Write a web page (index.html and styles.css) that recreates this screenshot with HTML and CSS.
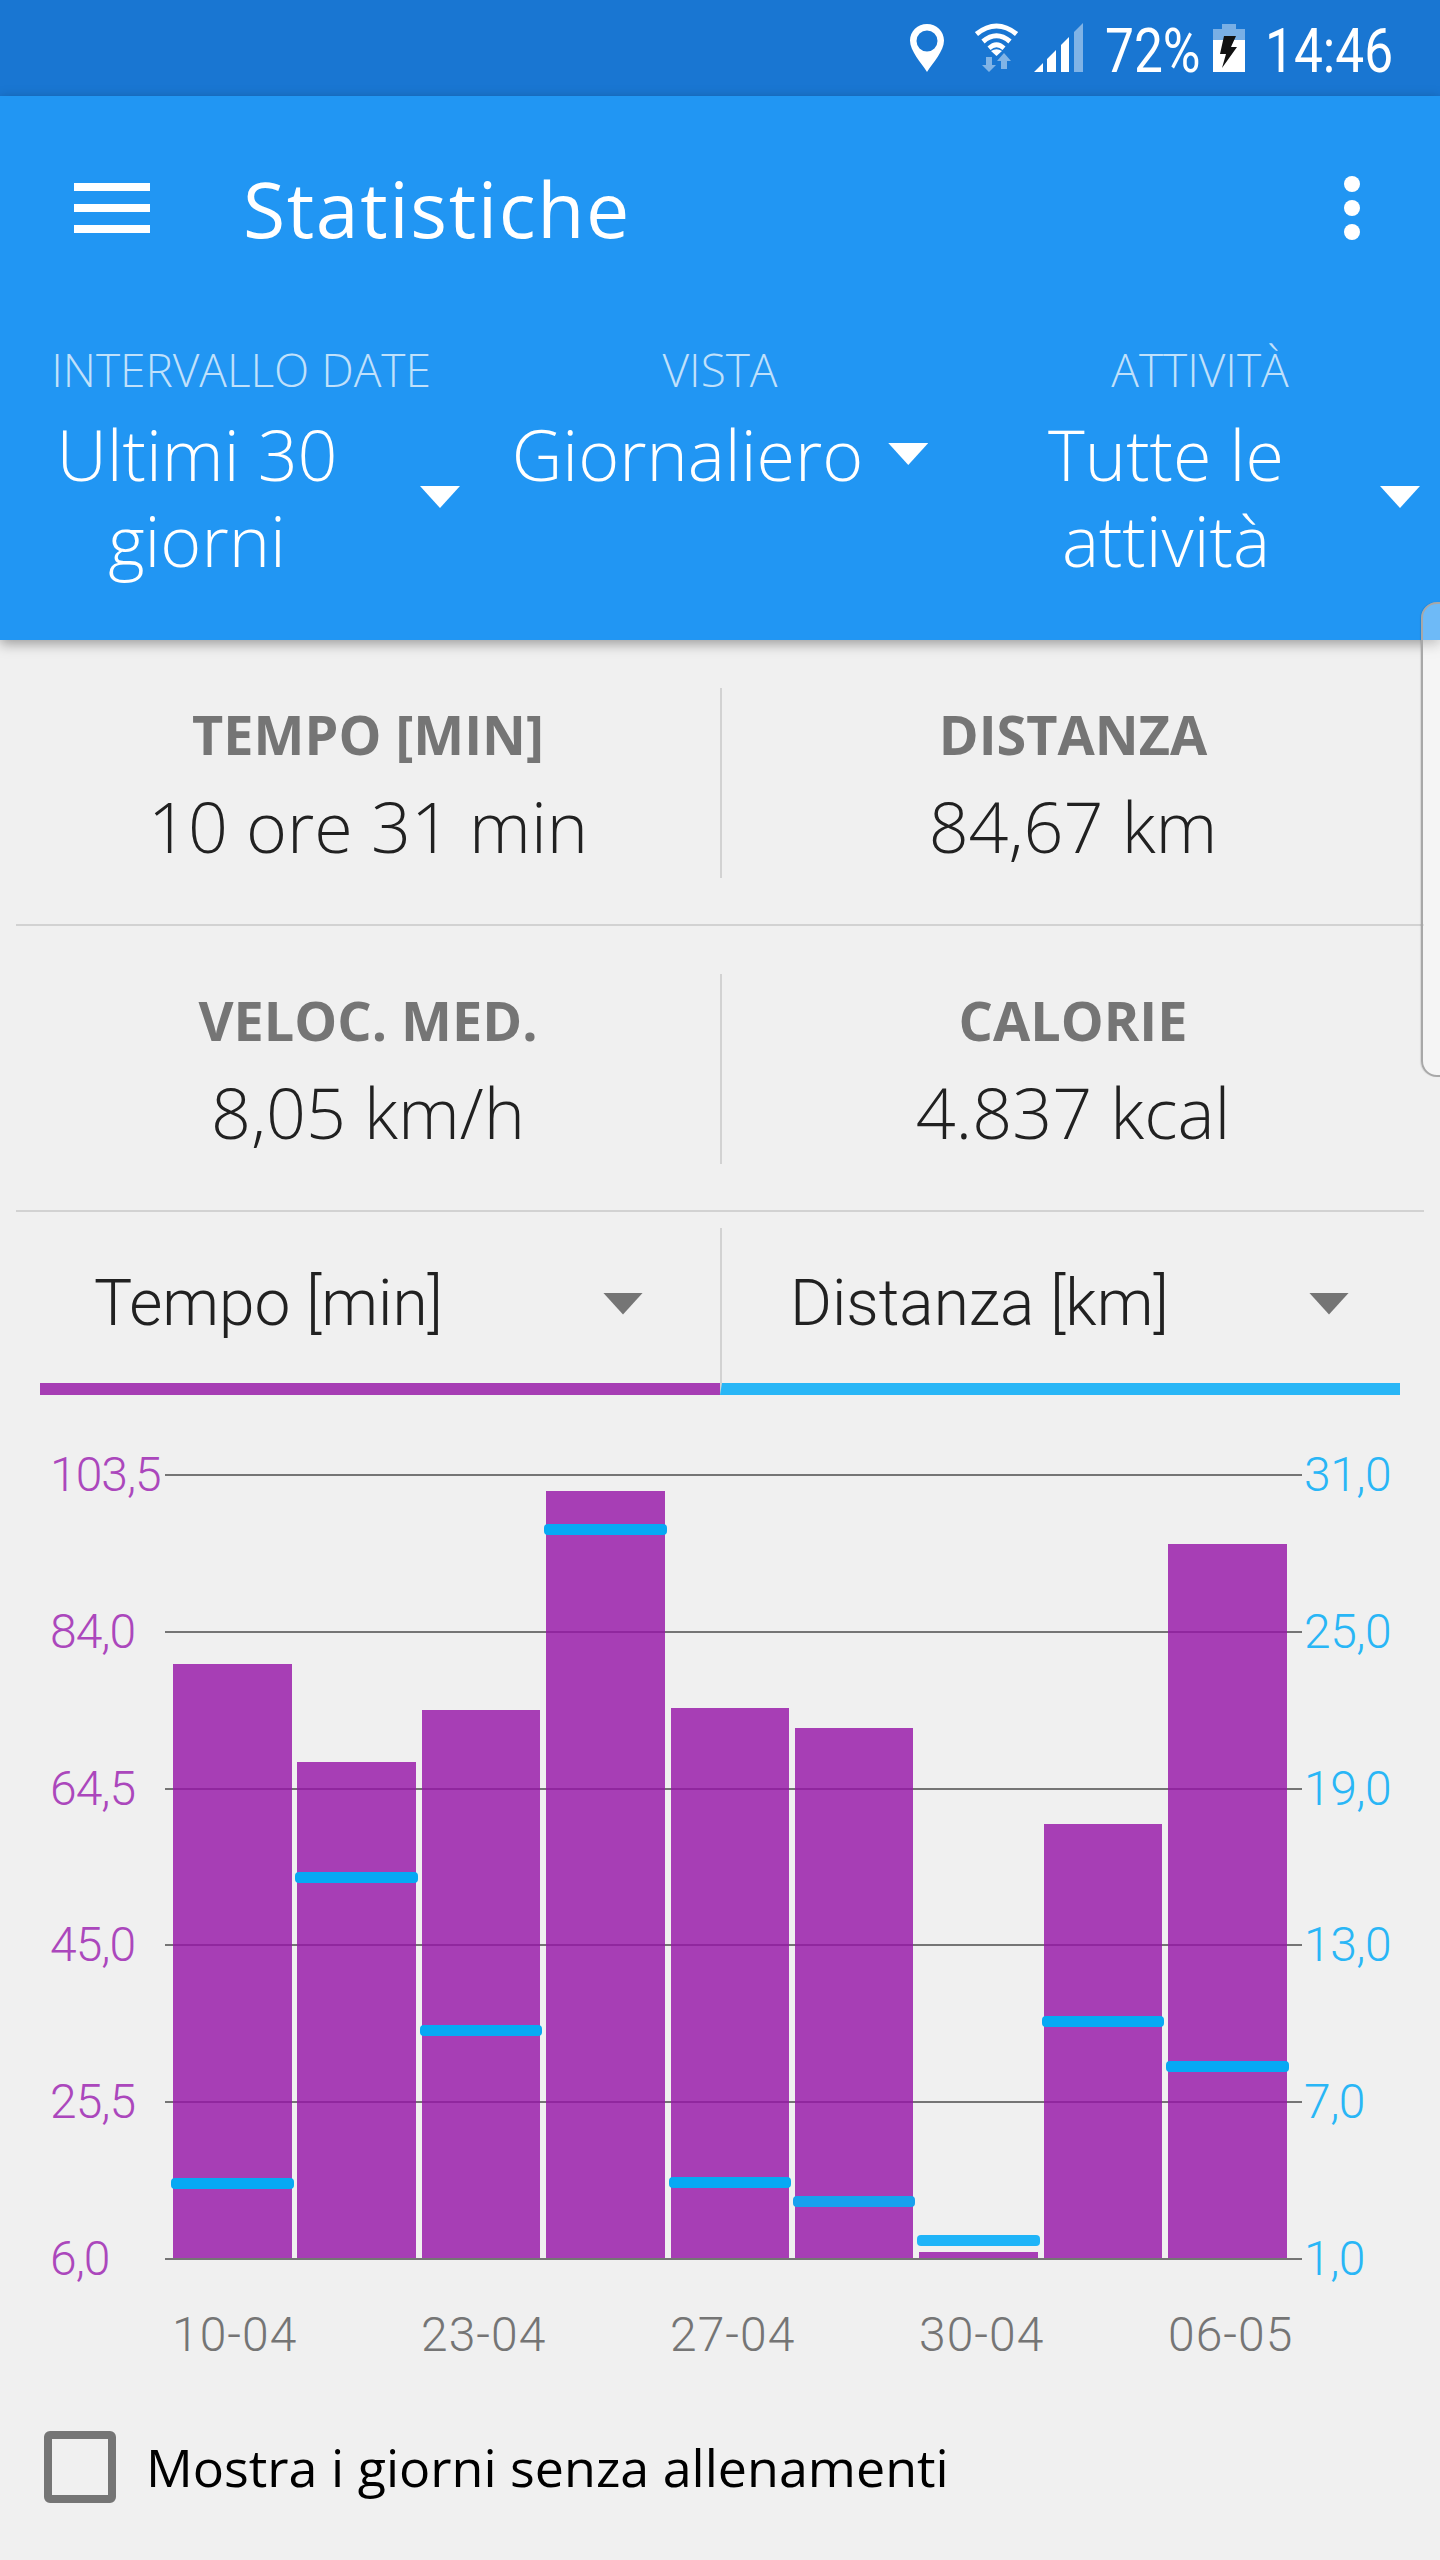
FILE: index.html
```html
<!DOCTYPE html>
<html lang="it">
<head>
<meta charset="utf-8">
<title>Statistiche</title>
<link rel="stylesheet" href="styles.css">
</head>
<body>
<div class="screen">
  <div class="statusbar">
    <svg class="ic-pin" viewBox="0 0 34 48"><path fill="#fff" fill-rule="evenodd" d="M17 0C7.6 0 0 7.4 0 16.5 0 27 11 38.5 17 48c6-9.5 17-21 17-31.5C34 7.4 26.4 0 17 0Zm0 6.5a10.5 10.5 0 1 1 0 21 10.5 10.5 0 0 1 0-21Z"/></svg>
    <svg class="ic-wifi" viewBox="0 0 43 49">
      <g fill="none" stroke="#fff" stroke-width="5"><path d="M1.5 11Q21.500 -5 41.500 11"/><path d="M8 18.500Q21.500 7 35 18.500"/></g>
      <path fill="#fff" d="M12.500 23.500Q21.500 15 30.500 23.500L27.500 27Q21.500 21.500 15.500 27Z"/>
      <path fill="#fff" d="M21.500 33L16 28Q21.500 24.500 27 28Z"/>
      <g fill="#fff" opacity=".45"><path d="M11 34h6v8h4l-7 7-7-7h4z"/><path d="M26 46h6v-8h4l-7-8-7 8h4z"/></g>
    </svg>
    <svg class="ic-signal" viewBox="0 0 49 49">
      <path fill="#fff" d="M0 49 9 40V49ZM13 36 22 27V49H13ZM27 22 35 14V49H27Z"/>
      <path fill="#fff" opacity=".45" d="M40 9 49 0V49H40Z"/>
    </svg>
    <span class="st-text st-pct">72%</span>
    <svg class="ic-batt" viewBox="0 0 32 48">
      <path fill="#fff" opacity=".42" d="M9 0H23V5H32V16H0V5H9Z"/>
      <path fill="#fff" d="M0 16H32V48H0Z"/>
      <path fill="#111" d="M11 12H23L18 23H24L9 44 13 30H7Z"/>
    </svg>
    <span class="st-text st-time">14:46</span>
  </div>

  <header class="appbar">
    <div class="toolbar">
      <div class="burger"><i></i><i></i><i></i></div>
      <h1 class="title">Statistiche</h1>
      <div class="overflow"><i></i><i></i><i></i></div>
    </div>
    <div class="filters">
      <div class="filter">
        <div class="filter-label">INTERVALLO DATE</div>
        <div class="filter-select">
          <div class="filter-value fv-date">Ultimi 30 giorni</div>
          <span class="arrow arrow-white ar-date"></span>
        </div>
      </div>
      <div class="filter">
        <div class="filter-label">VISTA</div>
        <div class="filter-select fs-center">
          <div class="filter-value">Giornaliero</div>
          <span class="arrow arrow-white ar-view"></span>
        </div>
      </div>
      <div class="filter">
        <div class="filter-label">ATTIVITÀ</div>
        <div class="filter-select">
          <div class="filter-value fv-act">Tutte le attività</div>
          <span class="arrow arrow-white ar-act"></span>
        </div>
      </div>
    </div>
  </header>

  <section class="stats">
    <div class="stat-row">
      <div class="stat"><div class="stat-label">TEMPO [MIN]</div><div class="stat-value">10 ore 31 min</div></div>
      <div class="stat stat-right"><div class="stat-label">DISTANZA</div><div class="stat-value">84,67 km</div></div>
    </div>
    <div class="stat-row">
      <div class="stat"><div class="stat-label">VELOC. MED.</div><div class="stat-value">8,05 km/h</div></div>
      <div class="stat stat-right"><div class="stat-label">CALORIE</div><div class="stat-value">4.837 kcal</div></div>
    </div>
  </section>

  <section class="tabs">
    <div class="tab tab-left"><span>Tempo [min]</span><span class="arrow arrow-gray"></span></div>
    <div class="tab tab-right"><span>Distanza [km]</span><span class="arrow arrow-gray"></span></div>
  </section>

  <section class="chart">
    <div class="axis axis-left">
      <span>103,5</span><span>84,0</span><span>64,5</span><span>45,0</span><span>25,5</span><span>6,0</span>
    </div>
    <div class="plot">
      <div class="gridlines"><i></i><i></i><i></i><i></i><i></i><i></i></div>
      <div class="cols">
        <div class="col"><div class="bar" style="height:594px"></div><div class="mark" style="bottom:71px"></div></div>
        <div class="col"><div class="bar" style="height:496px"></div><div class="mark" style="bottom:377px"></div></div>
        <div class="col"><div class="bar" style="height:548px"></div><div class="mark" style="bottom:224px"></div></div>
        <div class="col"><div class="bar" style="height:767px"></div><div class="mark" style="bottom:725px"></div></div>
        <div class="col"><div class="bar" style="height:550px"></div><div class="mark" style="bottom:72px"></div></div>
        <div class="col"><div class="bar" style="height:530px"></div><div class="mark mark-mid" style="bottom:53px"></div></div>
        <div class="col"><div class="bar" style="height:6px"></div><div class="mark mark-light" style="bottom:14px"></div></div>
        <div class="col"><div class="bar" style="height:434px"></div><div class="mark" style="bottom:233px"></div></div>
        <div class="col"><div class="bar" style="height:714px"></div><div class="mark" style="bottom:188px"></div></div>
      </div>
    </div>
    <div class="axis axis-right">
      <span>31,0</span><span>25,0</span><span>19,0</span><span>13,0</span><span>7,0</span><span>1,0</span>
    </div>
  </section>

  <div class="xlabels">
    <span>10-04</span><span>23-04</span><span>27-04</span><span>30-04</span><span>06-05</span>
  </div>

  <label class="check">
    <span class="box"></span>
    <span class="check-text">Mostra i giorni senza allenamenti</span>
  </label>

  <div class="edge-handle"></div>
</div>
</body>
</html>
```

FILE: styles.css
```css
* { box-sizing: border-box; }
html, body { margin: 0; padding: 0; }
body { background: #f0f0f0; }
.screen {
  position: relative;
  width: 1440px;
  height: 2560px;
  overflow: hidden;
  background: #f0f0f0;
  font-family: "Open Sans", "Noto Sans", sans-serif;
  color: #212121;
}

/* status bar */
.statusbar {
  display: flex;
  align-items: flex-start;
  height: 96px;
  padding: 23px 0 0 910px;
  background: #1976d2;
}
.ic-pin { width: 34px; height: 48px; margin-top: 1px; }
.ic-wifi { width: 43px; height: 49px; margin-left: 31px; }
.ic-signal { width: 49px; height: 49px; margin-left: 16px; }
.ic-batt { width: 32px; height: 48px; margin-left: 13px; margin-top: 1px; }
.st-text {
  display: inline-block;
  height: 49px;
  margin-top: 3px;
  font-family: Roboto, sans-serif;
  font-size: 62px;
  font-weight: 400;
  line-height: 49px;
  color: #fff;
  white-space: nowrap;
  transform-origin: left center;
  transform: scaleX(.83);
}
.st-pct { width: 95px; margin-left: 22px; }
.st-time { width: 128px; margin-left: 20px; }

/* app bar */
.appbar {
  position: relative;
  z-index: 2;
  height: 544px;
  background: #2196f3;
  color: #fff;
  box-shadow: 0 4px 12px rgba(0, 0, 0, .35);
}
.toolbar {
  display: flex;
  align-items: center;
  height: 224px;
  padding: 0 80px 0 74px;
}
.burger { display: flex; flex-direction: column; gap: 13px; width: 76px; }
.burger i { display: block; height: 8px; background: #fff; }
.title {
  flex: 1;
  margin: 0 0 0 93px;
  font-size: 77px;
  font-weight: 400;
  line-height: 1;
  letter-spacing: 1.6px;
}
.overflow { display: flex; flex-direction: column; gap: 8px; }
.overflow i { display: block; width: 16px; height: 16px; border-radius: 50%; background: #fff; }

.filters {
  display: grid;
  grid-template-columns: 438px 480px 440px;
  gap: 20px;
  padding: 21px 20px 0 22px;
}
.filter-label {
  height: 56px;
  font-size: 46px;
  font-weight: 300;
  line-height: 56px;
  text-align: center;
  color: rgba(255, 255, 255, .72);
  white-space: nowrap;
}
.filter-select {
  display: flex;
  align-items: center;
  margin-top: 14px;
}
.fs-center { justify-content: center; }
.filter-value {
  font-size: 70px;
  font-weight: 300;
  line-height: 86px;
  text-align: center;
}
.fv-date { width: 350px; padding: 0 30px; }
.fv-act { width: 372px; padding: 0 60px; }
.arrow {
  flex: none;
  display: block;
  width: 40px;
  height: 22px;
  clip-path: polygon(0 0, 100% 0, 50% 100%);
}
.arrow-white { background: #fff; }
.arrow-gray { background: #757575; }
.ar-date { margin-left: 48px; }
.ar-view { margin-left: 25px; }
.ar-act { margin-left: 28px; }

/* stats */
.stats { margin: 0 16px; }
.stat-row {
  display: grid;
  grid-template-columns: 704px 704px;
  height: 286px;
  padding-top: 48px;
  border-bottom: 2px solid #d2d2d2;
}
.stat {
  height: 190px;
  padding-top: 14px;
  text-align: center;
}
.stat-right { border-left: 2px solid #d2d2d2; }
.stat-label {
  font-size: 54px;
  font-weight: 700;
  line-height: 64px;
  color: #757575;
  white-space: nowrap;
}
.stat-value {
  margin-top: 17px;
  font-size: 70px;
  font-weight: 300;
  line-height: 86px;
  white-space: nowrap;
}

/* selector tabs */
.tabs {
  display: grid;
  grid-template-columns: 680px 680px;
  margin: 16px 40px 0;
  height: 167px;
  font-family: Roboto, sans-serif;
  font-size: 64px;
  font-weight: 300;
}
.tab {
  display: flex;
  align-items: center;
  justify-content: space-between;
  padding-bottom: 4px;
}
.tab-left { padding-left: 54px; padding-right: 77px; border-bottom: 12px solid #a63db4; }
.tab-right { padding-left: 68px; padding-right: 51px; border-left: 2px solid #d2d2d2; border-bottom: 12px solid #29b6f6; }

/* chart */
.chart {
  display: grid;
  grid-template-columns: 115px 1137px auto;
  height: 786px;
  margin: 79px 0 0 50px;
  font-family: Roboto, sans-serif;
  font-size: 48px;
  font-weight: 300;
}
.axis {
  display: flex;
  flex-direction: column;
  justify-content: space-between;
  height: 786px;
}
.axis span { display: block; height: 2px; line-height: 2px; white-space: nowrap; }
.axis-left { color: #ab47bc; letter-spacing: -1px; }
.axis-right { color: #29b6f6; padding-left: 2px; letter-spacing: -.5px; }

.plot { position: relative; height: 786px; }
.gridlines {
  position: absolute;
  inset: 0;
  display: flex;
  flex-direction: column;
  justify-content: space-between;
}
.gridlines i { display: block; height: 2px; background: #757575; }
.cols {
  position: relative;
  display: flex;
  gap: 5.9px;
  height: 100%;
  padding-left: 8px;
}
.col {
  position: relative;
  display: flex;
  align-items: flex-end;
  width: 118.5px;
  padding-bottom: 2px;
}
.bar { width: 100%; background: rgba(150, 22, 167, .82); }
.mark {
  position: absolute;
  left: -2px;
  right: -2px;
  height: 11px;
  border-radius: 4px;
  background: #06a9f4;
}
.mark-mid { background: #18a0ee; }
.mark-light { background: #1fb4f8; }

.xlabels {
  display: flex;
  margin: 47px 0 0 172px;
  font-family: Roboto, sans-serif;
  font-size: 48px;
  font-weight: 300;
  line-height: 56px;
  color: #757575;
  letter-spacing: 1px;
}
.xlabels span { width: 249px; }

/* checkbox */
.check {
  display: flex;
  align-items: center;
  gap: 30px;
  margin: 68px 0 0 44px;
}
.box {
  display: block;
  width: 72px;
  height: 72px;
  border: 8px solid #757575;
  border-radius: 6px;
}
.check-text { font-size: 52px; line-height: 72px; color: #000; white-space: nowrap; }

/* edge panel handle, lies over the page */
.edge-handle {
  position: absolute;
  z-index: 3;
  top: 602px;
  right: -20px;
  width: 39px;
  height: 475px;
  border: 2px solid #a8a8a8;
  border-radius: 16px;
  background: rgba(255, 255, 255, .35);
  box-shadow: -1px 0 1px rgba(0, 0, 0, .1);
}
```
